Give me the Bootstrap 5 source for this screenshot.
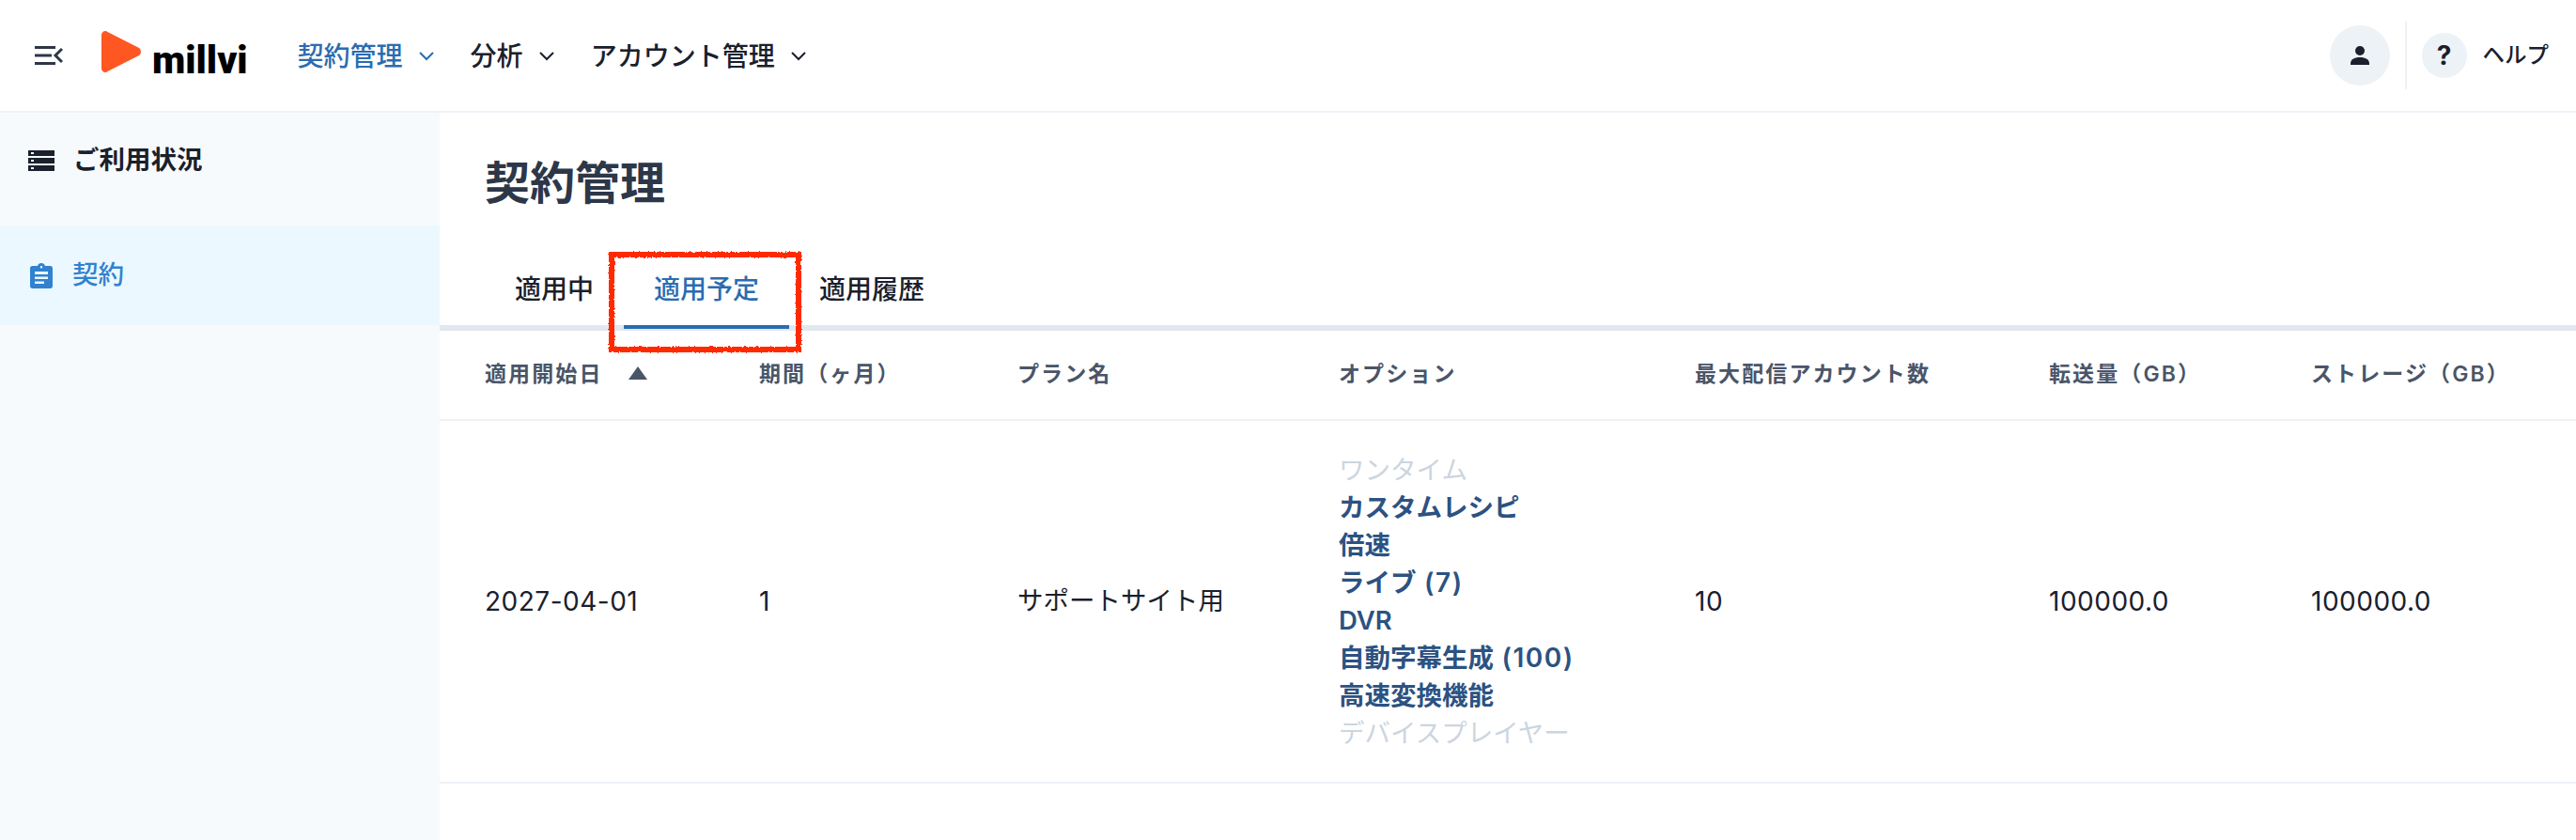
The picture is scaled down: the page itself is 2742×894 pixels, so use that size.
<!DOCTYPE html>
<html lang="ja">
  <head>
    <meta charset="UTF-8" />
    <title>契約管理</title>
    <link rel="stylesheet" href="https://cdn.jsdelivr.net/npm/bootstrap@5.3.3/dist/css/bootstrap.min.css" />
    <style>
      html, body { height: 100%; }
      body {
        font-family: Inter, "Noto Sans CJK JP", sans-serif;
        font-size: 28px;
        color: #1a202c;
        overflow: hidden;
        background: #fff;
      }
      .app-header {
        height: 120px;
        padding: 0 0 0 37px;
        border-bottom: 2px solid #edf2f7;
      }
      .logo-box { margin-left: 41px; margin-bottom: 8px; }
      .logo-word { font-family: Roboto, sans-serif; font-weight: 900; font-size: 41px; line-height: 1; color: #000; margin-left: 12px; margin-bottom: -8px; }
      .top-menu { margin-left: 53px; gap: 39px; padding-top: 2px; }
      .top-link { color: #1a202c; font-weight: 500; text-decoration: none; display: flex; align-items: center; gap: 17px; }
      .top-link.is-on { color: #2b6cb0; }
      .round-btn { border-radius: 50%; background: #edf2f7; display: flex; align-items: center; justify-content: center; }
      .round-user { width: 64px; height: 64px; }
      .round-help { width: 48px; height: 48px; font-weight: 700; font-size: 28px; }
      .v-rule { width: 2px; height: 72px; background: #edf2f7; margin: 0 16px; }
      .help-label { font-size: 23.5px; margin-left: 17px; margin-right: 29px; font-weight: 500; }
      .side-nav { width: 468px; background: #f7fafc; flex-shrink: 0; }
      .side-link { display: flex; align-items: center; gap: 20px; padding-left: 30px; text-decoration: none; color: #1a202c; font-weight: 700; font-size: 27.5px; }
      .side-first { height: 120px; padding-bottom: 18px; }
      .side-on { height: 106px; background: #ebf8ff; color: #3182ce; padding-left: 32px; font-weight: 500; gap: 21px; }
      .page-title { font-size: 48px; font-weight: 700; color: #2d3748; line-height: 1; margin: 0; padding: 51px 48px 0; }
      .tab-strip { padding: 55px 48px 0; height: 133px; border-bottom: 6px solid #e2e8f0; }
      .tab-item { position: relative; padding: 0 32px; height: 76px; line-height: 68px; font-weight: 500; color: #1a202c; text-decoration: none; }
      .tab-on { color: #2b6cb0; }
      .tab-on::after { content: ""; position: absolute; left: 0; right: 0; bottom: 0; height: 4px; background: #2b6cb0; }
      .red-mark { position: absolute; left: -16px; top: -6px; width: 205px; height: 107px; overflow: visible; }
      .plan-table { table-layout: fixed; width: 2274px; margin: 0; }
      .plan-table th, .plan-table td { padding: 0; border-bottom: 2px solid #edf2f7; vertical-align: middle; box-shadow: none; color: #1a202c; }
      .plan-table th { height: 95px; font-size: 23px; font-weight: 600; letter-spacing: 2.1px; color: #4a5568; padding-bottom: 2px; }
      .plan-table td { height: 386px; font-size: 27.5px; }
      .plan-table th:first-child, .plan-table td:first-child { padding-left: 48px; }
      .plan-table td.num-val { font-size: 28px; letter-spacing: .5px; }
      .w-a { width: 340px; } .w-b { width: 275px; } .w-c { width: 342px; } .w-d { width: 379px; } .w-e { width: 377px; } .w-f { width: 279px; } .w-g { width: 282px; }
      .sort-up { display: inline-block; margin-left: 27px; border-left: 10px solid transparent; border-right: 10px solid transparent; border-bottom: 14px solid #4a5568; vertical-align: 2px; }
      .opt-line { font-size: 27.5px; line-height: 40px; font-weight: 600; color: #2c5282; }
      .opt-off { font-weight: 400; color: #cbd5e0; }
      .opt-num { font-size: 28px; letter-spacing: 1.5px; }
    </style>
  </head>
  <body class="d-flex flex-column">
    <header class="app-header d-flex align-items-center flex-shrink-0">
      <svg width="30" height="20" viewBox="0 0 30 20" fill="none" stroke="#2d3748" stroke-width="3"><path d="M0 1.500h22M0 10h18M0 18.500h22M29 3l-7 7 7 7" /></svg>
      <div class="logo-box d-flex align-items-end">
        <svg width="42" height="44" viewBox="0 0 42 44"><path d="M4 0C2 0 0 2 0 4v36c0 2 2 4 4 4 1 0 2-.5 3-1.300L40 26c2.600-2 2.600-6 0-8L7 1.300C6 .5 5 0 4 0z" fill="#ff5722" /></svg>
        <span class="logo-word">millvi</span>
      </div>
      <nav class="top-menu d-flex">
        <a class="top-link is-on" href="#">契約管理
          <svg width="16" height="10" viewBox="0 0 16 10" fill="none" stroke="currentColor" stroke-width="2"><path d="M1 1l7 7 7-7" /></svg></a>
        <a class="top-link" href="#">分析
          <svg width="16" height="10" viewBox="0 0 16 10" fill="none" stroke="currentColor" stroke-width="2"><path d="M1 1l7 7 7-7" /></svg></a>
        <a class="top-link" href="#">アカウント管理
          <svg width="16" height="10" viewBox="0 0 16 10" fill="none" stroke="currentColor" stroke-width="2"><path d="M1 1l7 7 7-7" /></svg></a>
      </nav>
      <div class="d-flex align-items-center ms-auto">
        <div class="round-btn round-user">
          <svg width="20" height="20" viewBox="0 0 20 20" fill="#1a202c"><circle cx="10" cy="5" r="5" /><path d="M0 19c0-5 4-7 10-7s10 2 10 7v1H0z" /></svg>
        </div>
        <div class="v-rule"></div>
        <div class="round-btn round-help">?</div>
        <span class="help-label">ヘルプ</span>
      </div>
    </header>
    <div class="d-flex flex-grow-1">
      <aside class="side-nav">
        <a class="side-link side-first" href="#">
          <svg width="28" height="22" viewBox="0 0 28 22" fill="#1a202c"><path fill-rule="evenodd" d="M0 0h28v6H0zM3 2v2h3V2zM0 8h28v6H0zM3 10v2h3v-2zM0 16h28v6H0zM3 18v2h3v-2z" /></svg>
          <span>ご利用状況</span>
        </a>
        <a class="side-link side-on" href="#">
          <svg width="24" height="27" viewBox="0 0 24 27" fill="#3182ce"><path fill-rule="evenodd" d="M2.500 3H8c.5-2 2-3 4-3s3.500 1 4 3h5.500C23 3 24 4 24 5.500v19c0 1.500-1 2.500-2.500 2.500h-19C1 27 0 26 0 24.500v-19C0 4 1 3 2.500 3zM5 9v3h14V9zM5 14.500v2.500h14v-2.500zM5 19.500V22h10v-2.500zM12 3a1.200 1.200 0 1 0 0 2.400 1.200 1.200 0 0 0 0-2.400z" /></svg>
          <span>契約</span>
        </a>
      </aside>
      <main class="flex-grow-1">
        <h1 class="page-title">契約管理</h1>
        <div class="tab-strip d-flex">
          <a class="tab-item" href="#">適用中</a>
          <a class="tab-item tab-on" href="#">適用予定
            <svg class="red-mark" viewBox="0 0 205 107">
              <defs><filter id="rough" x="-5%" y="-5%" width="110%" height="110%"><feTurbulence type="fractalNoise" baseFrequency="0.5" numOctaves="2" seed="3" /><feDisplacementMap in="SourceGraphic" scale="3" /></filter></defs>
              <rect x="3" y="3" width="199" height="101" fill="none" stroke="#ff2a00" stroke-width="6" filter="url(#rough)" />
            </svg>
          </a>
          <a class="tab-item" href="#">適用履歴</a>
        </div>
        <table class="table plan-table">
          <thead>
            <tr>
              <th class="w-a">適用開始日<span class="sort-up"></span></th>
              <th class="w-b">期間（ヶ月）</th>
              <th class="w-c">プラン名</th>
              <th class="w-d">オプション</th>
              <th class="w-e">最大配信アカウント数</th>
              <th class="w-f">転送量（GB）</th>
              <th class="w-g">ストレージ（GB）</th>
            </tr>
          </thead>
          <tbody>
            <tr>
              <td class="num-val">2027-04-01</td>
              <td class="num-val">1</td>
              <td>サポートサイト用</td>
              <td>
                <div class="opt-line opt-off">ワンタイム</div>
                <div class="opt-line">カスタムレシピ</div>
                <div class="opt-line">倍速</div>
                <div class="opt-line">ライブ<span class="opt-num"> (7)</span></div>
                <div class="opt-line">DVR</div>
                <div class="opt-line">自動字幕生成<span class="opt-num"> (100)</span></div>
                <div class="opt-line">高速変換機能</div>
                <div class="opt-line opt-off">デバイスプレイヤー</div>
              </td>
              <td class="num-val">10</td>
              <td class="num-val">100000.0</td>
              <td class="num-val">100000.0</td>
            </tr>
          </tbody>
        </table>
      </main>
    </div>
    <script src="https://cdn.jsdelivr.net/npm/bootstrap@5.3.3/dist/js/bootstrap.bundle.min.js"></script>
  </body>
</html>
